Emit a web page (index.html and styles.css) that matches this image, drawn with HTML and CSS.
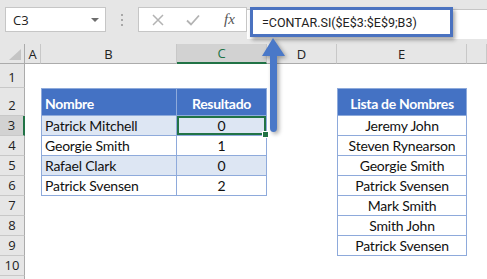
FILE: index.html
```html
<!DOCTYPE html>
<html lang="es">
<head>
  <meta charset="UTF-8">
  <meta name="viewport" content="width=device-width, initial-scale=1">
  <title>CONTAR.SI - Lista de Nombres</title>
  <link rel="stylesheet" href="styles.css">
</head>
<body>
  <div class="excel">

    <!-- Barra de fórmulas -->
    <div class="formula-bar">
      <div class="name-box">
        <span>C3</span>
        <span class="caret"></span>
      </div>
      <div class="grip"><i></i><i></i><i></i></div>
      <div class="fx-buttons">
        <svg width="12" height="12" viewBox="0 0 12 12">
          <path d="M1 1 L11 11 M11 1 L1 11" stroke="#b3b3b3" stroke-width="1.5" fill="none"/>
        </svg>
        <svg width="14" height="12" viewBox="0 0 14 12">
          <path d="M1 6.5 L5 10.5 L13 1.5" stroke="#b3b3b3" stroke-width="1.8" fill="none"/>
        </svg>
        <span class="fx">fx</span>
      </div>
      <div class="formula-input"></div>
    </div>

    <!-- Hoja -->
    <div class="sheet">
      <div class="row row-hd">
        <div class="corner"><span class="corner-tri"></span></div>
        <div class="ch">A</div>
        <div class="ch">B</div>
        <div class="ch ch-sel">C</div>
        <div class="ch">D</div>
        <div class="ch">E</div>
        <div class="ch"></div>
      </div>

      <div class="row row-1">
        <div class="rh">1</div>
        <div></div><div></div><div></div><div></div><div></div><div></div>
      </div>

      <div class="row row-2">
        <div class="rh">2</div>
        <div></div>
        <div class="cell th first">Nombre</div>
        <div class="cell th center">Resultado</div>
        <div></div>
        <div class="cell th first center">Lista de Nombres</div>
        <div></div>
      </div>

      <div class="row">
        <div class="rh rh-sel">3</div>
        <div></div>
        <div class="cell band first">Patrick Mitchell</div>
        <div class="cell band center selected">0</div>
        <div></div>
        <div class="cell first center">Jeremy John</div>
        <div></div>
      </div>

      <div class="row">
        <div class="rh">4</div>
        <div></div>
        <div class="cell first">Georgie Smith</div>
        <div class="cell center">1</div>
        <div></div>
        <div class="cell first center">Steven Rynearson</div>
        <div></div>
      </div>

      <div class="row">
        <div class="rh">5</div>
        <div></div>
        <div class="cell band first">Rafael Clark</div>
        <div class="cell band center">0</div>
        <div></div>
        <div class="cell first center">Georgie Smith</div>
        <div></div>
      </div>

      <div class="row">
        <div class="rh">6</div>
        <div></div>
        <div class="cell first">Patrick Svensen</div>
        <div class="cell center">2</div>
        <div></div>
        <div class="cell first center">Patrick Svensen</div>
        <div></div>
      </div>

      <div class="row">
        <div class="rh">7</div>
        <div></div><div></div><div></div><div></div>
        <div class="cell first center">Mark Smith</div>
        <div></div>
      </div>

      <div class="row">
        <div class="rh">8</div>
        <div></div><div></div><div></div><div></div>
        <div class="cell first center">Smith John</div>
        <div></div>
      </div>

      <div class="row">
        <div class="rh">9</div>
        <div></div><div></div><div></div><div></div>
        <div class="cell first center">Patrick Svensen</div>
        <div></div>
      </div>

      <div class="row">
        <div class="rh">10</div>
        <div></div><div></div><div></div><div></div><div></div><div></div>
      </div>

      <!-- fila 11, apenas asoma por abajo -->
      <div class="row">
        <div class="rh"></div>
        <div></div><div></div><div></div><div></div><div></div><div></div>
      </div>
    </div>

    <!-- Resaltado de la fórmula y flecha -->
    <div class="callout">=CONTAR.SI($E$3:$E$9;B3)</div>
    <svg class="arrow" width="36" height="104" viewBox="0 0 36 104">
      <path d="M15 4 L4 22 L12 22 L12 94 Q12 98 15.5 98 Q19 98 19 94 L19 22 L27 22 Z" fill="#4a78c8"/>
    </svg>
  </div>
</body>
</html>
```

FILE: styles.css
```css
body {
  margin: 0;
  background: #fff;
  overflow: hidden;
}

.excel {
  position: relative;
  width: 487px;
  height: 279px;
  overflow: hidden;
  font-family: "Open Sans", "Noto Sans", sans-serif;
  color: #222;
}

/* barra de fórmulas */
.formula-bar {
  display: flex;
  align-items: flex-start;
  height: 44px;
  padding: 7px 0 0 5px;
  box-sizing: border-box;
  background: #e6e6e6;
}
.name-box {
  display: flex;
  align-items: center;
  justify-content: space-between;
  width: 101px;
  height: 25px;
  padding: 0 6px 0 7px;
  box-sizing: border-box;
  background: #fff;
  border: 1px solid #c6c6c6;
  font-size: 13px;
}
.caret {
  width: 0;
  height: 0;
  border-left: 4px solid transparent;
  border-right: 4px solid transparent;
  border-top: 4px solid #6d6d6d;
}
.grip {
  display: flex;
  flex-direction: column;
  align-items: center;
  gap: 3px;
  width: 32px;
  padding-top: 7px;
}
.grip i {
  width: 2px;
  height: 2px;
  background: #a8a8a8;
}
.fx-buttons {
  display: flex;
  align-items: center;
  gap: 22px;
  width: 109px;
  height: 25px;
  padding-left: 13px;
  box-sizing: border-box;
  background: #fff;
  border: 1px solid #c6c6c6;
}
.fx {
  margin-left: 2px;
  font-family: "Liberation Serif", serif;
  font-style: italic;
  font-size: 15px;
  color: #555;
}
.formula-input {
  flex: 1;
  height: 29px;
  margin-top: 2px;
  background: #fff;
  border-top: 1px solid #c6c6c6;
}

/* hoja */
.row {
  display: grid;
  grid-template-columns: 25px 16px 136px 90px 70px 130px 1fr;
  height: 20px;
}
.row-hd { height: 18px; }
.row-1 { height: 26px; }
.row-2 { height: 28px; }

.corner,
.ch {
  background: #e6e6e6;
  border-right: 1px solid #c8c8c8;
  border-bottom: 1px solid #ababab;
}
.corner {
  position: relative;
  border-right-color: #ababab;
}
.corner-tri {
  position: absolute;
  right: 3px;
  bottom: 3px;
  width: 0;
  height: 0;
  border-left: 12px solid transparent;
  border-bottom: 11px solid #c4c4c4;
}
.ch {
  display: flex;
  align-items: center;
  justify-content: center;
  font-size: 13px;
  color: #222;
}
.ch-sel {
  background: #d2d2d2;
  color: #217346;
  border-bottom: 2px solid #217346;
}

.rh {
  display: flex;
  align-items: flex-end;
  justify-content: center;
  padding-bottom: 1px;
  box-sizing: border-box;
  background: #e6e6e6;
  border-right: 1px solid #ababab;
  border-bottom: 1px solid #c8c8c8;
  font-size: 13px;
  color: #222;
}
.rh-sel {
  background: #d2d2d2;
  border-right: 2px solid #217346;
}

/* celdas de las tablas */
.cell {
  display: flex;
  align-items: flex-end;
  padding: 0 3px 1px;
  box-sizing: border-box;
  border-right: 1px solid #8eaadb;
  border-bottom: 1px solid #8eaadb;
  font-family: Lato, "Liberation Sans", sans-serif;
  font-size: 14px;
  letter-spacing: -0.2px;
  color: #111;
  white-space: nowrap;
}
.cell.first { border-left: 1px solid #8eaadb; }
.cell.center { justify-content: center; }
.th {
  background: #4472c4;
  color: #fff;
  font-weight: bold;
  letter-spacing: -0.3px;
  border-top: 1px solid #8eaadb;
  padding-bottom: 3px;
}
.band { background: #dde6f3; }
.selected {
  position: relative;
  box-shadow: inset 0 0 0 2px #217346;
}
.selected::after {
  content: "";
  position: absolute;
  right: -3px;
  bottom: -3px;
  width: 5px;
  height: 5px;
  background: #217346;
  border: 1px solid #fff;
  z-index: 2;
}

/* resaltado de la fórmula */
.callout {
  position: absolute;
  left: 250px;
  top: 7px;
  width: 203px;
  height: 30px;
  box-sizing: border-box;
  padding-left: 9px;
  display: flex;
  align-items: center;
  background: #fff;
  border: 3px solid #4a72c0;
  box-shadow: 2px 3px 4px rgba(0, 0, 0, 0.35);
  font-family: Roboto, "Liberation Sans", sans-serif;
  font-size: 12.5px;
  color: #222;
}
.arrow {
  position: absolute;
  left: 258px;
  top: 34px;
  filter: drop-shadow(2px 2px 2px rgba(0, 0, 0, 0.35));
}
```
